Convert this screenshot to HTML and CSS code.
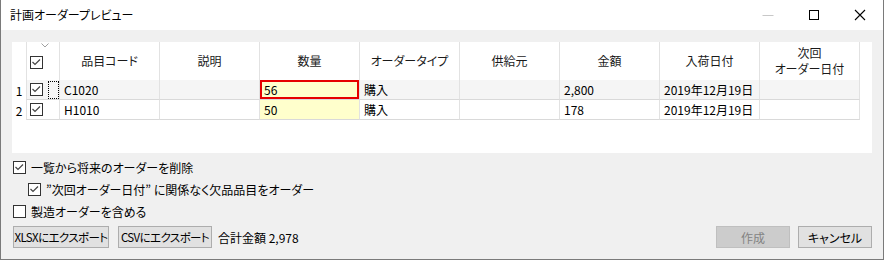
FILE: index.html
```html
<!DOCTYPE html>
<html lang="ja">
<head>
  <meta charset="UTF-8">
  <title>計画オーダープレビュー</title>
  <link rel="stylesheet" href="styles.css">
</head>
<body>

  <div class="window">
    <!-- タイトルバー -->
    <div class="titlebar">
      <span class="title">計画オーダープレビュー</span>
      <div class="caption">
        <span class="cap-btn">
          <svg width="12" height="12" viewBox="0 0 12 12"><line x1="0.5" y1="6.5" x2="11.5" y2="6.5" stroke="#c8c8c8" stroke-width="1"/></svg>
        </span>
        <span class="cap-btn">
          <svg width="12" height="12" viewBox="0 0 12 12"><rect x="1.5" y="1.5" width="9" height="9" fill="none" stroke="#000" stroke-width="1"/></svg>
        </span>
        <span class="cap-btn">
          <svg width="12" height="12" viewBox="0 0 12 12"><path d="M1 1 L11 11 M11 1 L1 11" stroke="#000" stroke-width="1.1" fill="none"/></svg>
        </span>
      </div>
    </div>

    <div class="content">
      <!-- 一覧 -->
      <div class="grid-panel">
        <div class="grid-head">
          <div class="cell num"></div>
          <div class="cell chk">
            <svg class="chevron" width="8" height="5" viewBox="0 0 8 5"><polyline points="0.5,0.5 4,4 7.5,0.5" fill="none" stroke="#a0a0a0" stroke-width="1"/></svg>
            <span class="box checked"></span>
          </div>
          <div class="cell">品目コード</div>
          <div class="cell">説明</div>
          <div class="cell">数量</div>
          <div class="cell">オーダータイプ</div>
          <div class="cell">供給元</div>
          <div class="cell">金額</div>
          <div class="cell">入荷日付</div>
          <div class="cell">次回<br>オーダー日付</div>
        </div>

        <div class="grid-row current">
          <div class="cell num">1</div>
          <div class="cell chk"><span class="box checked"></span><span class="focus"></span></div>
          <div class="cell">C1020</div>
          <div class="cell"></div>
          <div class="cell qty editing">56</div>
          <div class="cell">購入</div>
          <div class="cell"></div>
          <div class="cell">2,800</div>
          <div class="cell">2019年12月19日</div>
          <div class="cell"></div>
        </div>

        <div class="grid-row">
          <div class="cell num">2</div>
          <div class="cell chk"><span class="box checked"></span></div>
          <div class="cell">H1010</div>
          <div class="cell"></div>
          <div class="cell qty">50</div>
          <div class="cell">購入</div>
          <div class="cell"></div>
          <div class="cell">178</div>
          <div class="cell">2019年12月19日</div>
          <div class="cell"></div>
        </div>
      </div>

      <!-- オプション -->
      <div class="options">
        <label class="option"><span class="box checked"></span>一覧から将来のオーダーを削除</label>
        <label class="option sub"><span class="box checked"></span>”次回オーダー日付” に関係なく欠品品目をオーダー</label>
        <label class="option"><span class="box"></span>製造オーダーを含める</label>
      </div>

      <div class="footer">
        <button class="btn xlsx">XLSXにエクスポート</button>
        <button class="btn csv">CSVにエクスポート</button>
        <span class="total">合計金額 2,978</span>
        <div class="spacer"></div>
        <button class="btn wide" disabled>作成</button>
        <button class="btn wide">キャンセル</button>
      </div>
    </div>
  </div>

</body>
</html>
```

FILE: styles.css
```css
body {
  margin: 0;
  font-family: "Noto Sans CJK JP", "Noto Sans", sans-serif;
  font-size: 12px;
  font-feature-settings: "palt";
  color: #000;
}

.window {
  width: 884px;
  height: 260px;
  box-sizing: border-box;
  border: 1px solid #7a7a7a;
  border-top: none;
  display: flex;
  flex-direction: column;
  background: #f0f0f0;
}

.titlebar {
  height: 30px;
  background: #fff;
  display: flex;
  align-items: center;
}

.title {
  padding-left: 9px;
  font-size: 12px;
  line-height: 30px;
}

.caption {
  margin-left: auto;
  display: flex;
  height: 30px;
}

.cap-btn {
  width: 46px;
  height: 30px;
  display: flex;
  align-items: center;
  justify-content: center;
}

.content {
  flex: 1;
  padding: 12px 11px 0 11px;
}

/* 一覧 */
.grid-panel {
  background: #fff;
  width: 860px;
  height: 111px;
}

.grid-head, .grid-row {
  display: grid;
  grid-template-columns: 14px 34px repeat(8, 100px);
}

.grid-head {
  height: 38px;
}

.grid-row {
  height: 20px;
}

.cell {
  box-sizing: border-box;
  border-right: 1px solid #e2e2e2;
  display: flex;
  align-items: center;
  white-space: nowrap;
  overflow: hidden;
}

.grid-head .cell {
  justify-content: center;
  text-align: center;
  line-height: 16px;
  color: #1a1a1a;
}

.grid-row .cell {
  padding-left: 4px;
  border-bottom: 1px solid #d9d9d9;
}

.cell.num {
  border: none !important;
  justify-content: center;
  padding-left: 0 !important;
  background: #fff !important;
}

.cell.chk {
  border-left: 1px solid #e2e2e2;
  padding-left: 3px !important;
  justify-content: flex-start !important;
  position: relative;
}

.grid-head .cell.chk {
  padding-top: 2px;
}

.chevron {
  position: absolute;
  top: 1px;
  left: 14px;
}

.grid-row.current .cell {
  background: #f5f5f5;
}

.grid-row .cell.qty {
  background: #ffffcc;
}

.cell.editing {
  box-shadow: inset 0 0 0 2px #e60000;
}

.focus {
  width: 11px;
  height: 18px;
  box-sizing: border-box;
  border: 1px dotted #000;
  margin-left: 5px;
}

/* チェックボックス */
.box {
  display: inline-block;
  flex: none;
  width: 13px;
  height: 13px;
  box-sizing: border-box;
  border: 1px solid #333;
  background: #fff;
}

.box.checked {
  background-image: url("data:image/svg+xml,%3Csvg xmlns='http://www.w3.org/2000/svg' width='11' height='11' viewBox='0 0 11 11'%3E%3Cpolyline points='1.5,5 4,7.5 9,2.5' fill='none' stroke='%23444' stroke-width='1.2'/%3E%3C/svg%3E");
  background-repeat: no-repeat;
  background-position: center;
}

/* オプション */
.options {
  margin-top: 3px;
}

.option {
  display: flex;
  align-items: center;
  height: 22px;
  padding-left: 1px;
}

.option .box {
  margin-right: 5px;
}

.option.sub {
  padding-left: 16px;
}

.footer {
  margin-top: 4px;
  display: flex;
  align-items: center;
}

.btn {
  font-family: inherit;
  font-size: 11.5px;
  font-feature-settings: "palt";
  letter-spacing: -0.6px;
  white-space: nowrap;
  height: 22px;
  padding: 0;
  background: #e1e1e1;
  border: 1px solid #adadad;
  color: #000;
  margin: 0;
}

.btn.xlsx {
  width: 96px;
  margin-left: 1px;
}

.btn.csv {
  width: 94px;
  margin-left: 9px;
}

.btn.wide {
  width: 74px;
  margin-left: 8px;
  font-size: 12px;
  letter-spacing: 0;
}

.btn:disabled {
  background: #cccccc;
  border-color: #bfbfbf;
  color: #838383;
}

.total {
  margin-left: 6px;
}

.spacer {
  flex: 1;
}
```
